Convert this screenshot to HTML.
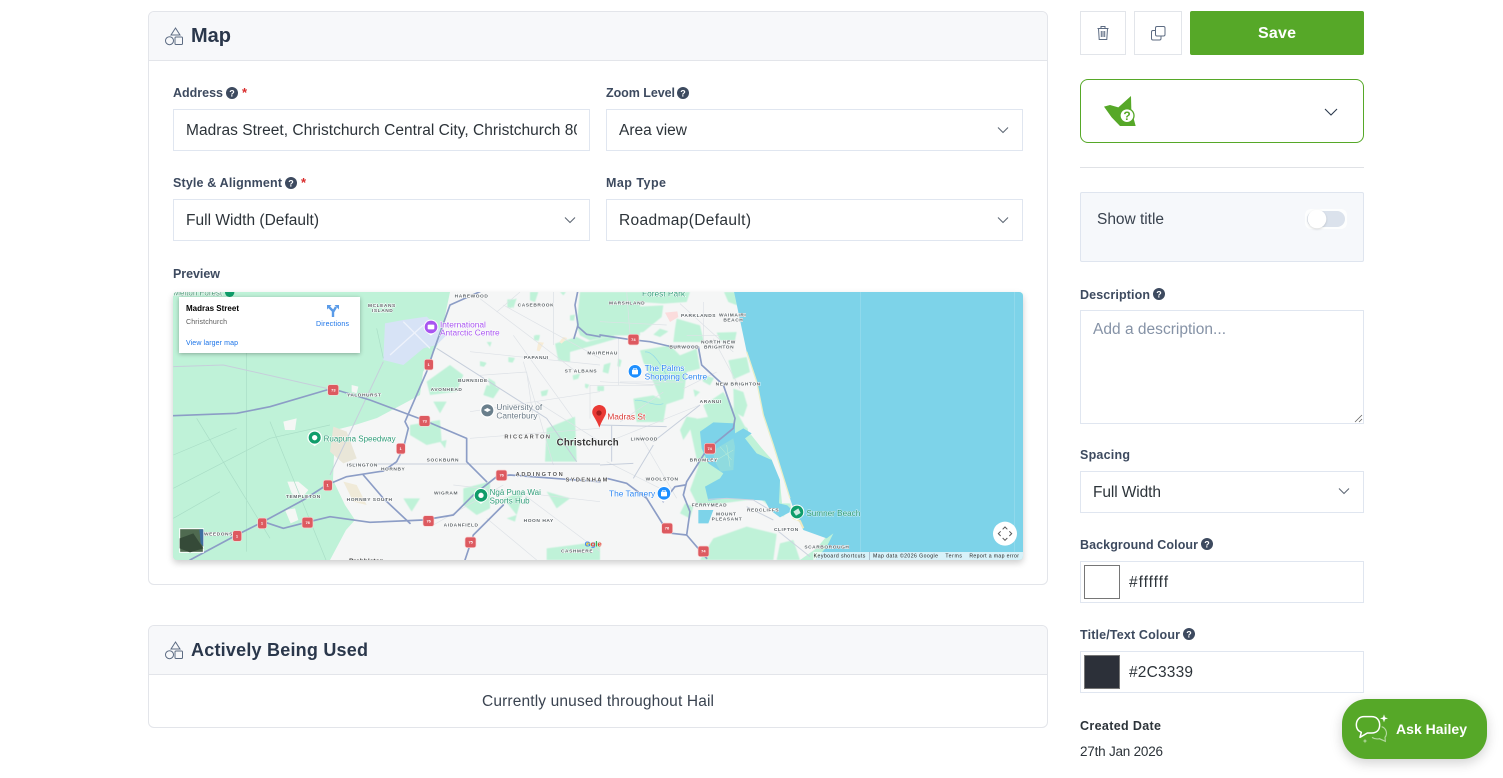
<!DOCTYPE html>
<html lang="en"><head><meta charset="utf-8"><title>Map</title>
<style>
html,body{margin:0;padding:0;background:#fff;width:1503px;height:778px;overflow:hidden}
body{position:relative;font-family:"Liberation Sans",sans-serif}
.b{position:absolute;box-sizing:border-box}
.f{border:1.5px solid #e0e6f0;background:#fff}
.card{border:1px solid #e3e5ea;border-radius:6px;background:#fff;overflow:hidden}
.hd{background:#f7f8fa;border-bottom:1px solid #e3e5ea}
svg{position:absolute;left:0;top:0}
.l{font:bold 12.5px "Liberation Sans",sans-serif;fill:#3d4a5f}
.t{font:15.5px "Liberation Sans",sans-serif;fill:#2c3339}
.h{font:bold 18px "Liberation Sans",sans-serif;fill:#2a374b}
.q{font:bold 9px "Liberation Sans",sans-serif;fill:#fff;text-anchor:middle}
.m{font:bold 14.5px "Liberation Sans",sans-serif;fill:#5d6468;paint-order:stroke;stroke:#fff;stroke-width:3px;letter-spacing:1.7px}
.g{font:24px "Liberation Sans",sans-serif;fill:#2f9c78;paint-order:stroke;stroke:#fff;stroke-width:3px}
.p{font:25px "Liberation Sans",sans-serif;paint-order:stroke;stroke:#fff;stroke-width:3px}
.s{font:bold 12px "Liberation Sans",sans-serif;fill:#fff;text-anchor:middle}
.hw{fill:none;stroke:#8c9dc6;stroke-width:5;stroke-linejoin:round;stroke-linecap:round}
.rd{fill:none;stroke:#c6cedb;stroke-width:3}
.lr{fill:none;stroke:#dde1e6;stroke-width:2}
.rr{fill:none;stroke:#a9ddc6;stroke-width:2}
.gr{fill:#bff2d8}
</style></head><body>
<div class="b card" style="left:148px;top:11px;width:900px;height:574px"><div class="hd" style="height:48px"></div></div>
<div class="b card" style="left:148px;top:625px;width:900px;height:103px"><div class="hd" style="height:48px"></div></div>
<div class="b f" style="left:173px;top:109px;width:417px;height:42px"></div>
<div class="b f" style="left:606px;top:109px;width:417px;height:42px"></div>
<div class="b f" style="left:173px;top:199px;width:417px;height:42px"></div>
<div class="b f" style="left:606px;top:199px;width:417px;height:42px"></div>
<div class="b" style="left:173px;top:292px;width:850px;height:268px;border-radius:4px;box-shadow:0 3px 7px rgba(0,0,0,.2);background:#bff2d8"></div>
<div class="b f" style="left:1080px;top:11px;width:46px;height:44px;border-color:#e2e5ea"></div>
<div class="b f" style="left:1134px;top:11px;width:48px;height:44px;border-color:#e2e5ea"></div>
<div class="b" style="left:1190px;top:11px;width:174px;height:44px;background:#56a828;border-radius:2px"></div>
<div class="b" style="left:1080px;top:79px;width:284px;height:64px;border:1.3px solid #56a828;border-radius:8px"></div>
<div class="b" style="left:1080px;top:167px;width:284px;height:1px;background:#e0e2e6"></div>
<div class="b" style="left:1080px;top:192px;width:284px;height:70px;background:#f6f8fb;border:1px solid #dfe5ef;border-radius:2px"></div>
<div class="b f" style="left:1080px;top:310px;width:284px;height:114px"></div>
<div class="b f" style="left:1080px;top:471px;width:284px;height:42px"></div>
<div class="b f" style="left:1080px;top:561px;width:284px;height:42px"></div>
<div class="b f" style="left:1080px;top:651px;width:284px;height:42px"></div>
<div class="b" style="left:1084px;top:565px;width:36px;height:34px;background:#fff;border:1.3px solid #767676"></div>
<div class="b" style="left:1084px;top:655px;width:36px;height:34px;background:#2c3039;border:1.3px solid #767676"></div>
<div class="b" style="left:1342px;top:699px;width:145px;height:60px;background:#56a828;border-radius:25px;box-shadow:0 4px 12px rgba(0,0,0,.18)"></div>

<svg width="850" height="268" viewBox="173 292 850 268" style="left:173px;top:292px;border-radius:4px">
<defs>
<g id="pin"><path d="M0,26C-4,20-22,16-22,0A22,22 0 0 1 22,0C22,16 4,20 0,26Z" fill="#fff"/></g>
<filter id="soft" x="-5%" y="-5%" width="110%" height="110%"><feGaussianBlur stdDeviation="1.6"/></filter>
</defs>
<rect x="173" y="292" width="850" height="268" fill="#bff2d8"/>
<path d="M450,292L735,292L757,385L790,498L800,510L830,532L817,548L800,560L330,560L346,530L355,520L345,505L333,480L335,430L355,425L377,418L420,395L423,372L440,340Z" fill="#f5f6f6"/>

<!-- Green patches & water, north-centre (zoom C) -->
<g transform="translate(480,292) scale(.33333)"><g class="gr" filter="url(#soft)">
<path d="M300,0L490,0L480,40L480,130L400,130L330,145L300,130L290,100Z"/>
<path d="M225,155L290,135L320,150L400,130L410,140L340,160L270,180L270,210L235,205Z"/>
<path d="M82,22L102,22L95,48L82,46Z"/><path d="M150,0L175,0L165,30L150,25Z"/><path d="M162,130L178,135L172,146L162,144Z"/><path d="M85,195L105,198L98,212L85,210Z"/><path d="M372,218L392,212L385,245L368,240Z"/><path d="M278,250L300,245L295,260L280,264Z"/><path d="M182,298L205,293L200,310L185,313Z"/><path d="M352,282L372,282L372,297L352,297Z"/><path d="M0,208L18,212L12,224L0,222Z"/><path d="M25,258L45,270L50,295L30,285Z"/><path d="M270,70L285,68L282,86L270,85Z"/><path d="M415,200L425,205L420,225L412,222Z"/><path d="M240,0L258,0L250,10Z"/><path d="M315,275L328,278L322,290L315,286Z"/><path d="M20,150L35,150L30,165Z"/>
</g>
<path d="M250,135L262,138L245,155L238,150ZM175,150L192,152L178,178L170,175Z" fill="#f7ecd6"/>
<path class="lr" d="M0,20L290,240M100,130L280,380M140,240L160,380M0,250L140,240M220,0L220,140M330,280L520,280M330,280L330,380M415,140L415,280M120,0L50,60"/>
</g>

<!-- zoom A: Parklands / Burwood / New Brighton -->
<g transform="translate(620,292) scale(.33333)"><g class="gr" filter="url(#soft)">
<path d="M30,45L130,40L125,75L70,120L30,125Z"/><path d="M60,0L210,0L200,30L130,35L60,30Z"/>
<path d="M170,80L240,100L252,150L160,150L165,110Z"/>
<path d="M60,175L150,160L180,190L230,170L240,230L200,240L190,320L130,340L100,270L70,210Z"/>
<path d="M40,320L100,310L140,330L130,390L50,390Z"/>
<path d="M220,292L240,300L225,315Z"/>
<path d="M325,205L380,195L390,240L340,262Z"/>
<path d="M250,340L310,300L340,350L345,390L270,390Z"/>
<path d="M340,290L370,300L382,340L370,375L342,360Z"/>
<path d="M290,122L350,120L345,145L300,145Z"/>
<path d="M312,0L345,0L352,40L325,30Z"/><path d="M250,250L282,258L270,280L248,268Z"/>
<path d="M120,110L145,118L120,135L100,128Z"/>
</g>
<path d="M135,62L172,58L175,75L150,90Z" fill="#fbdcdc"/>
<path d="M75,180C100,175 130,230 145,260M45,325C70,320 100,345 130,335" fill="none" stroke="#8fd9e8" stroke-width="2"/>
<path class="lr" d="M180,35L340,180M250,30L250,150M280,140L360,290M200,130L300,130M0,270L190,270M130,300L0,390M190,290L290,240"/>
</g>

<!-- zoom B: estuary and hills -->
<g transform="translate(680,410) scale(.33333)">
<g class="gr" filter="url(#soft)">
<path d="M25,30L60,25L170,5L195,50L225,70L275,140L305,200L332,285L310,320L280,300L240,265L90,285L55,290L30,240L55,170Z"/>
<path d="M100,385L200,350L290,372L280,450L60,450Z"/><path d="M300,400L340,390L360,450L290,450Z"/>
<path d="M0,60L20,20L50,25L30,60L10,90Z"/><path d="M15,280L40,290L30,325L0,310Z"/>
</g>
<path d="M200,32L228,0L248,0L332,245L330,280L306,280L300,215L275,148L205,70Z" fill="#f5f6f6"/>
<path d="M210,70L272,148L300,215L298,280L330,284L335,298L300,312L297,265L270,160L215,110Z" class="gr"/>
<path d="M60,65L100,37L165,40L165,70L190,55L215,70L195,85L230,130L275,150L300,210L297,280L322,286L338,302L300,322L270,300L255,272L200,268L140,265L85,272L75,230L120,205L130,190L85,160L65,115Z" fill="#7dd3e9"/>
<path d="M102,120L160,85L165,110L160,180L122,185L102,150Z" fill="#8fdbdf"/>
<path d="M120,110L155,150M140,105L150,170M110,150L160,120" stroke="#bfefd8" stroke-width="1.5"/>
<path d="M55,300L100,300L85,340L55,340Z" fill="#7dd3e9"/>
<path d="M85,268L140,265L220,270L270,300M200,290L280,330M290,360L390,440" class="rd" style="stroke:#ccd3df"/>
</g>

<!-- South / sea -->
<g transform="translate(600,285) scale(.33333)">
<path d="M402,20L1270,20L1270,830L640,830L680,786L700,745L680,760L610,735L585,685L570,640L545,560L520,480L490,390L470,290L440,200Z" fill="#7dd3e9"/>
<path d="M440,200L470,290L490,390L520,480L545,560L570,640" fill="none" stroke="#e9efc9" stroke-width="4"/>
<path d="M578,698L600,708L610,730" fill="none" stroke="#efe9c0" stroke-width="6"/>
<path d="M781,20V800M1243,20V800" stroke="#9adcee" stroke-width="2" fill="none"/>
</g>

<g transform="translate(170,285) scale(.33333)">
<path d="M645,115L700,105L770,95L830,150L800,180L760,190L700,240L640,225Z" fill="#d7e3f6"/>
<path d="M700,110L780,190M660,210L760,120" stroke="#eef2fb" stroke-width="4"/>
<g class="gr" filter="url(#soft)"><path d="M1130,430L1215,395L1220,530L1125,530Z"/><path d="M720,420L810,405L815,470L770,480L720,450Z"/><path d="M840,240L880,270L860,320L780,330L770,290Z"/><path d="M880,610L960,590L960,670L920,690L880,660Z"/><path d="M950,300L990,310L970,340L940,330Z"/><path d="M1000,640L1060,620L1040,690Z"/><path d="M1130,620L1200,640L1160,670Z"/><path d="M1130,790L1290,770L1290,825L1130,825Z"/><path d="M790,350L830,350L810,385Z"/><path d="M1015,50L1040,40L1030,70Z"/><path d="M810,470L830,465L825,490Z"/><path d="M700,640L750,640L725,680Z"/><path d="M1095,150L1110,150L1105,170Z"/><path d="M930,230L950,235L940,245Z"/><path d="M1010,700L1040,690L1035,710Z"/></g>
<g fill="#f5f7f5"><path d="M340,410L380,400L375,435L345,435Z"/><path d="M352,590L385,590L415,615L395,640L365,625Z"/><path d="M345,675L375,670L385,705L362,715Z"/><path d="M545,300L565,305L560,325L545,320Z"/></g>
<path d="M490,425L530,440L560,520L520,535L480,500Z" fill="#e9e6d8"/>
<path d="M520,590L560,600L590,660L550,650Z" fill="#f0ead8"/>
<path class="rr" d="M10,610L300,460L480,420M10,510L200,430M230,200L230,800M80,400L300,760M300,410L470,830M10,700L150,620M620,130L640,220"/>
<path class="lr" d="M900,200L1290,240M900,380L1290,320M1000,60L1290,220M1060,230L1150,540M900,460L1290,430M1150,20L1150,180M850,600L1290,650M790,720L1000,600M1050,620L1290,800M1100,350L1290,470M950,700L1100,825"/>
<path class="rd" d="M530,537L1290,537M640,230L480,570M800,190L1130,400L1220,530M10,245L160,240L470,310"/>
<path class="hw" d="M10,392L200,385L300,365L470,315L510,318L600,345L760,405L890,460L890,530L950,590"/>
<path class="hw" d="M60,825L200,750L280,710L400,645L470,600L530,575L640,558L680,530L700,490L715,430L705,410L770,260L790,200L840,60L930,20"/>
<path class="hw" d="M280,710L340,730L410,712L480,695L600,712L760,705L850,690L910,630L980,575L1020,570L1190,583L1290,590"/>
<path class="hw" d="M580,570L640,640L720,715M885,825L910,750L1000,660M1223,20L1215,60L1224,120L1212,160M1224,125L1250,148L1290,155"/>
</g>

<g transform="translate(600,285) scale(.33333)">
<path class="lr" d="M0,290L180,300M0,480L300,360M120,450L230,640M20,530L200,620M0,110L200,120M80,20L90,150"/>
<path class="rd" d="M0,420L200,425M35,420L35,530M0,540L100,535M160,480L100,580M300,360L160,470"/>
<path class="hw" d="M0,150L85,163L150,170L205,183L295,185L305,240L370,300L405,400L400,430L345,475L320,495L260,590L250,630L270,680L260,750L320,820"/>
<path class="hw" d="M20,580L80,595L140,640L190,720L215,745L260,750M190,650L225,605L255,600"/>
<g fill="#dd5a60" stroke="#f9d5d5" stroke-width="2"><rect x="84" y="148" width="33" height="32" rx="7"/><rect x="313" y="475" width="33" height="32" rx="7"/><rect x="185" y="714" width="33" height="32" rx="7"/><rect x="294" y="783" width="33" height="32" rx="7"/></g>
<g class="s"><text x="100" y="168">74</text><text x="329" y="495">74</text><text x="201" y="734">76</text><text x="310" y="803">74</text></g>
<text x="126" y="35" class="g" style="font-size:25px">Forest Park</text>
<g class="m"><text x="27" y="58">MARSHLAND</text><text x="243" y="96">PARKLANDS</text><text x="357" y="94">WAIMAIRI</text><text x="370" y="110">BEACH</text><text x="303" y="175">NORTH NEW</text><text x="208" y="191">BURWOOD</text><text x="312" y="191">BRIGHTON</text><text x="-38" y="208">MAIREHAU</text><text x="347" y="302">NEW BRIGHTON</text><text x="299" y="354">ARANUI</text><text x="92" y="467">LINWOOD</text><text x="269" y="529">BROMLEY</text><text x="137" y="586">WOOLSTON</text><text x="275" y="664">FERRYMEAD</text><text x="348" y="692">MOUNT</text><text x="335" y="707">PLEASANT</text><text x="441" y="680">REDCLIFFS</text><text x="522" y="738">CLIFTON</text><text x="613" y="791">SCARBOROUGH</text></g>
<use href="#pin" x="105" y="259"/><circle cx="105" cy="259" r="19" fill="#1e8fff"/><rect x="96" y="254" width="18" height="14" rx="2" fill="#fff"/><path d="M101,254V250H109V254" fill="none" stroke="#fff" stroke-width="2"/>
<text x="134" y="258" class="p" style="fill:#2d86f0">The Palms</text>
<text x="134" y="284" class="p" style="fill:#2d86f0">Shopping Centre</text>
<use href="#pin" x="192" y="625"/><circle cx="192" cy="625" r="19" fill="#1e8fff"/><rect x="183" y="620" width="18" height="14" rx="2" fill="#fff"/><path d="M188,620V616H196V620" fill="none" stroke="#fff" stroke-width="2"/>
<text x="27" y="635" class="p" style="fill:#2d86f0">The Tannery</text>
<use href="#pin" x="591" y="681"/><circle cx="591" cy="681" r="19" fill="#0f9d6a"/><path d="M580,680L595,670L602,684L588,692Z" fill="#fff" opacity=".8"/>
<text x="619" y="693" style="font:24.5px 'Liberation Sans',sans-serif;fill:#2f9c78;paint-order:stroke;stroke:#cfeff6;stroke-width:3px">Sumner Beach</text>
<path d="M-3,360C-20,362-27,378-21,390C-16,400-8,410-2,428C4,410 12,400 17,388C22,374 13,360-3,360Z" fill="#ea3a35"/><circle cx="-3" cy="384" r="8" fill="#a51f1c"/>
<text x="22" y="403" class="p" style="fill:#d93a36">Madras St</text>
<text x="-42" y="785" style="font:bold 23px 'Liberation Sans',sans-serif;fill:#fbbc05">o<tspan fill="#4285f4">g</tspan><tspan fill="#34a853">l</tspan><tspan fill="#ea4335">e</tspan></text>
<circle cx="1215" cy="746" r="36" fill="#fff"/>
<path d="M1208,733L1215,726L1222,733M1208,759L1215,766L1222,759M1202,739L1195,746L1202,753M1228,739L1235,746L1228,753" fill="none" stroke="#555" stroke-width="3"/>
<rect x="640" y="801" width="630" height="25" fill="#fff" opacity=".7"/>
<g style="font:15.5px 'Liberation Sans',sans-serif;fill:#222"><text x="641" y="818" textLength="155">Keyboard shortcuts</text><text x="819" y="818" textLength="195">Map data ©2026 Google</text><text x="1036" y="818" textLength="50">Terms</text><text x="1108" y="818" textLength="149">Report a map error</text></g>
<path d="M809,801V826" stroke="#9ab" stroke-width="2"/>
</g>

<g transform="translate(170,285) scale(.33333)">
<g fill="#dd5a60" stroke="#f9d5d5" stroke-width="2"><rect x="473" y="299" width="33" height="32" rx="7"/><rect x="747" y="392" width="33" height="32" rx="7"/><rect x="763" y="223" width="27" height="32" rx="7"/><rect x="679" y="475" width="27" height="32" rx="7"/><rect x="460" y="585" width="27" height="32" rx="7"/><rect x="263" y="699" width="27" height="32" rx="7"/><rect x="188" y="737" width="27" height="32" rx="7"/><rect x="396" y="697" width="33" height="32" rx="7"/><rect x="759" y="692" width="33" height="32" rx="7"/><rect x="978" y="555" width="33" height="32" rx="7"/><rect x="885" y="756" width="33" height="32" rx="7"/></g>
<g class="s"><text x="490" y="320">73</text><text x="764" y="413">73</text><text x="776" y="243">1</text><text x="692" y="495">1</text><text x="473" y="605">1</text><text x="276" y="719">1</text><text x="201" y="757">1</text><text x="413" y="717">76</text><text x="776" y="712">76</text><text x="995" y="575">76</text><text x="902" y="776">75</text></g>
<g class="m"><text x="594" y="66">MCLEANS</text><text x="606" y="81">ISLAND</text><text x="854" y="38">HAREWOOD</text><text x="1043" y="64">CASEBROOK</text><text x="1062" y="222">PAPANUI</text><text x="1184" y="262">ST ALBANS</text><text x="864" y="291">BURNSIDE</text><text x="782" y="318">AVONHEAD</text><text x="531" y="334">YALDHURST</text><text x="770" y="529">SOCKBURN</text><text x="530" y="545">ISLINGTON</text><text x="633" y="557">HORNBY</text><text x="348" y="639">TEMPLETON</text><text x="530" y="648">HORNBY SOUTH</text><text x="792" y="629">WIGRAM</text><text x="821" y="724">AIDANFIELD</text><text x="1061" y="711">HOON HAY</text><text x="102" y="752">WEEDONS</text><text x="1173" y="803">CASHMERE</text></g>
<g style="font:bold 17px 'Liberation Sans',sans-serif;fill:#555;paint-order:stroke;stroke:#fff;stroke-width:3px"><text x="1003" y="460" textLength="137">RICCARTON</text><text x="1037" y="573" textLength="141">ADDINGTON</text><text x="1187" y="589" textLength="125">SYDENHAM</text></g>
<text x="1160" y="482" textLength="186" style="font:bold 29px 'Liberation Sans',sans-serif;fill:#333;paint-order:stroke;stroke:#fff;stroke-width:3px">Christchurch</text>
<text x="537" y="834" style="font:bold 20px 'Liberation Sans',sans-serif;fill:#444">Prebbleton</text>
<text x="10" y="32" class="g" style="fill:#4c9a78">Melton Forest</text>
<circle cx="179" cy="22" r="14" fill="#0f9d6a"/>
<use href="#pin" x="783" y="126"/><circle cx="783" cy="126" r="19" fill="#a855f0"/><rect x="773" y="119" width="20" height="14" rx="3" fill="#fff"/>
<text x="810" y="127" class="p" style="fill:#a855f0">International</text>
<text x="810" y="152" class="p" style="fill:#a855f0">Antarctic Centre</text>
<use href="#pin" x="952" y="376"/><circle cx="952" cy="376" r="18" fill="#6a7f8c"/><path d="M941,375L952,369L963,375L952,381Z" fill="#fff"/>
<text x="979" y="375" class="p" style="fill:#6a7a86">University of</text>
<text x="979" y="400" class="p" style="fill:#6a7a86">Canterbury</text>
<use href="#pin" x="434" y="458"/><circle cx="434" cy="458" r="18" fill="#0f9d6a"/><circle cx="434" cy="458" r="8" fill="#fff"/>
<text x="461" y="470" class="g">Ruapuna Speedway</text>
<use href="#pin" x="933" y="631"/><circle cx="933" cy="631" r="19" fill="#0f9d6a"/><circle cx="933" cy="631" r="8" fill="#fff"/>
<text x="959" y="630" class="g">Ngā Puna Wai</text><text x="959" y="656" class="g">Sports Hub</text>
<rect x="29" y="731" width="71" height="71" fill="#4f6a50" stroke="#fff" stroke-width="3"/><path d="M29,760L70,745L100,790L60,802L29,790Z" fill="#354a38"/><path d="M88,733L100,733L100,785L92,775Z" fill="#3d6ea0"/>
<text x="1244" y="785" style="font:bold 23px 'Liberation Sans',sans-serif;fill:#4285f4">G<tspan fill="#ea4335">o</tspan></text>
</g>

<rect x="179" y="297" width="181" height="56" fill="#fff" style="filter:drop-shadow(0 1px 2px rgba(0,0,0,.3))"/>
<text x="186" y="311" textLength="53" style="font:bold 8px 'Liberation Sans',sans-serif;fill:#000">Madras Street</text>
<text x="186" y="324" textLength="41" style="font:7px 'Liberation Sans',sans-serif;fill:#5b5b5b">Christchurch</text>
<text x="186" y="345" textLength="52" style="font:7px 'Liberation Sans',sans-serif;fill:#1a73e8">View larger map</text>
<text x="316" y="326" textLength="33" style="font:7px 'Liberation Sans',sans-serif;fill:#1a73e8">Directions</text>
<path d="M333,317V311L329,307M333,312L336,307" fill="none" stroke="#5a9be8" stroke-width="2.4"/>
<path d="M327,305H331.5L327,309.5ZM339,305H334.5L339,309.5Z" fill="#5a9be8"/>
</svg>

<svg width="1503" height="778" viewBox="0 0 1503 778">
<defs><clipPath id="ac"><rect x="180" y="110" width="397" height="40"/></clipPath>
<g id="sh" fill="none" stroke="#5c6b82" stroke-width="1"><path d="M175.5,28L180,35H171Z"/><circle cx="169.5" cy="40.7" r="4"/><rect x="175" y="37" width="7.5" height="7.5" rx="1"/></g>
<path id="ch" d="M-5,-2.5L0,2.5L5,-2.5" fill="none" stroke="#5e6875" stroke-width="1.1"/>
</defs>
<use href="#sh"/><use href="#sh" y="614"/>
<text class="h" x="191" y="42" textLength="40" style="font-size:20px">Map</text>
<text class="h" x="191" y="656" textLength="177">Actively Being Used</text>
<text class="l" x="173" y="97" textLength="50">Address</text>
<g fill="#3d4a5f"><circle cx="232" cy="93" r="6"/><circle cx="683" cy="93" r="6"/><circle cx="291" cy="183" r="6"/><circle cx="1159" cy="294" r="6"/><circle cx="1207" cy="544" r="6"/><circle cx="1189" cy="634" r="6"/></g>
<g class="q"><text x="232" y="96.3">?</text><text x="683" y="96.3">?</text><text x="291" y="186.3">?</text><text x="1159" y="297.3">?</text><text x="1207" y="547.3">?</text><text x="1189" y="637.3">?</text></g>
<text x="242" y="97" style="font:bold 13px 'Liberation Sans',sans-serif;fill:#d92c2c">*</text>
<text x="301" y="187" style="font:bold 13px 'Liberation Sans',sans-serif;fill:#d92c2c">*</text>
<text class="l" x="606" y="97" textLength="69">Zoom Level</text>
<text class="l" x="173" y="187" textLength="109">Style &amp; Alignment</text>
<text class="l" x="606" y="187" textLength="60">Map Type</text>
<text class="l" x="173" y="278" textLength="47">Preview</text>
<g clip-path="url(#ac)"><text class="t" x="186" y="135" textLength="396">Madras Street, Christchurch Central City, Christchurch 80</text></g>
<text class="t" x="619" y="135" textLength="68">Area view</text>
<text class="t" x="186" y="225" textLength="133">Full Width (Default)</text>
<text class="t" x="619" y="225" textLength="132">Roadmap(Default)</text>
<use href="#ch" x="1003" y="130"/><use href="#ch" x="570" y="220"/><use href="#ch" x="1003" y="220"/><use href="#ch" x="1344" y="491"/>
<text class="t" x="482" y="706" textLength="232" style="fill:#3a4350">Currently unused throughout Hail</text>

<g fill="none" stroke="#5c6b82" stroke-width="1"><path d="M1097.5,28.5H1108.5M1101,28.5V26.5H1105V28.5M1098.5,28.5L1099.2,39.5H1106.8L1107.5,28.5M1101.3,31V37M1103,31V37M1104.7,31V37"/>
<rect x="1151.5" y="30.5" width="9.5" height="9.5" rx="1.5"/><rect x="1155.5" y="26.5" width="9.5" height="9.5" rx="1.5" fill="#fff"/></g>
<text x="1258" y="38" textLength="38" style="font:bold 16px 'Liberation Sans',sans-serif;fill:#fff">Save</text>

<g transform="translate(1070,0) scale(.33333)">
<path d="M102,320L120,315L145,322L183,288L184,330L197,378L150,378L125,352Z" fill="#56a828"/>
<circle cx="171" cy="347" r="21" fill="#fff" stroke="#56a828" stroke-width="4"/>
<text x="171" y="360" style="font:bold 36px 'Liberation Sans',sans-serif;fill:#56a828;text-anchor:middle">?</text>
</g>
<path d="M1325,109L1331,115L1337,109" fill="none" stroke="#2c3a4e" stroke-width="1.1"/>

<text class="t" x="1097" y="224" textLength="67" style="fill:#39424e">Show title</text>
<rect x="1305" y="209" width="42" height="20" rx="6" fill="#fff" opacity=".8"/>
<rect x="1307" y="211" width="38" height="16" rx="8" fill="#dbe2ec"/>
<circle cx="1317" cy="219" r="9.3" fill="#fff" style="filter:drop-shadow(0 1px 1px rgba(0,0,0,.15))"/>

<text class="l" x="1080" y="299" textLength="70">Description</text>
<text class="t" x="1093" y="334" textLength="133" style="fill:#8592a6">Add a description...</text>
<path d="M1355,422L1362,415M1359,422L1362,419" stroke="#666" stroke-width=".8" fill="none"/>
<text class="l" x="1080" y="459" textLength="50">Spacing</text>
<text class="t" x="1093" y="497" textLength="68">Full Width</text>
<text class="l" x="1080" y="549" textLength="118">Background Colour</text>
<text class="t" x="1129" y="587" textLength="39">#ffffff</text>
<text class="l" x="1080" y="639" textLength="100">Title/Text Colour</text>
<text class="t" x="1129" y="677" textLength="64">#2C3339</text>
<text class="l" x="1080" y="730" textLength="81" style="fill:#2c3339">Created Date</text>
<text class="t" x="1080" y="756" textLength="83" style="font-size:13.5px">27th Jan 2026</text>
<text x="1396" y="734" textLength="71" style="font:bold 14px 'Liberation Sans',sans-serif;fill:#fff">Ask Hailey</text>
<g transform="translate(1070,530) scale(.33333)">
<path d="M882,560H905C920,560 929,570 929,585C929,600 920,609 905,609H892L870,622L874,607C864,603 859,595 859,585C859,570 868,560 882,560Z" fill="none" stroke="#fff" stroke-width="4.5" stroke-linejoin="round"/>
<path d="M935,590C950,595 953,612 945,622L946,634L928,626C920,628 912,626 906,622" fill="none" stroke="#fff" stroke-width="3.5" opacity=".55"/>
<path d="M942,553L945,562L954,565L945,568L942,577L939,568L930,565L939,562Z" fill="#fff"/>
<path d="M885,626L887,631L892,633L887,635L885,640L883,635L878,633L883,631Z" fill="#fff" opacity=".55"/>
</g>
</svg>
</body></html>
